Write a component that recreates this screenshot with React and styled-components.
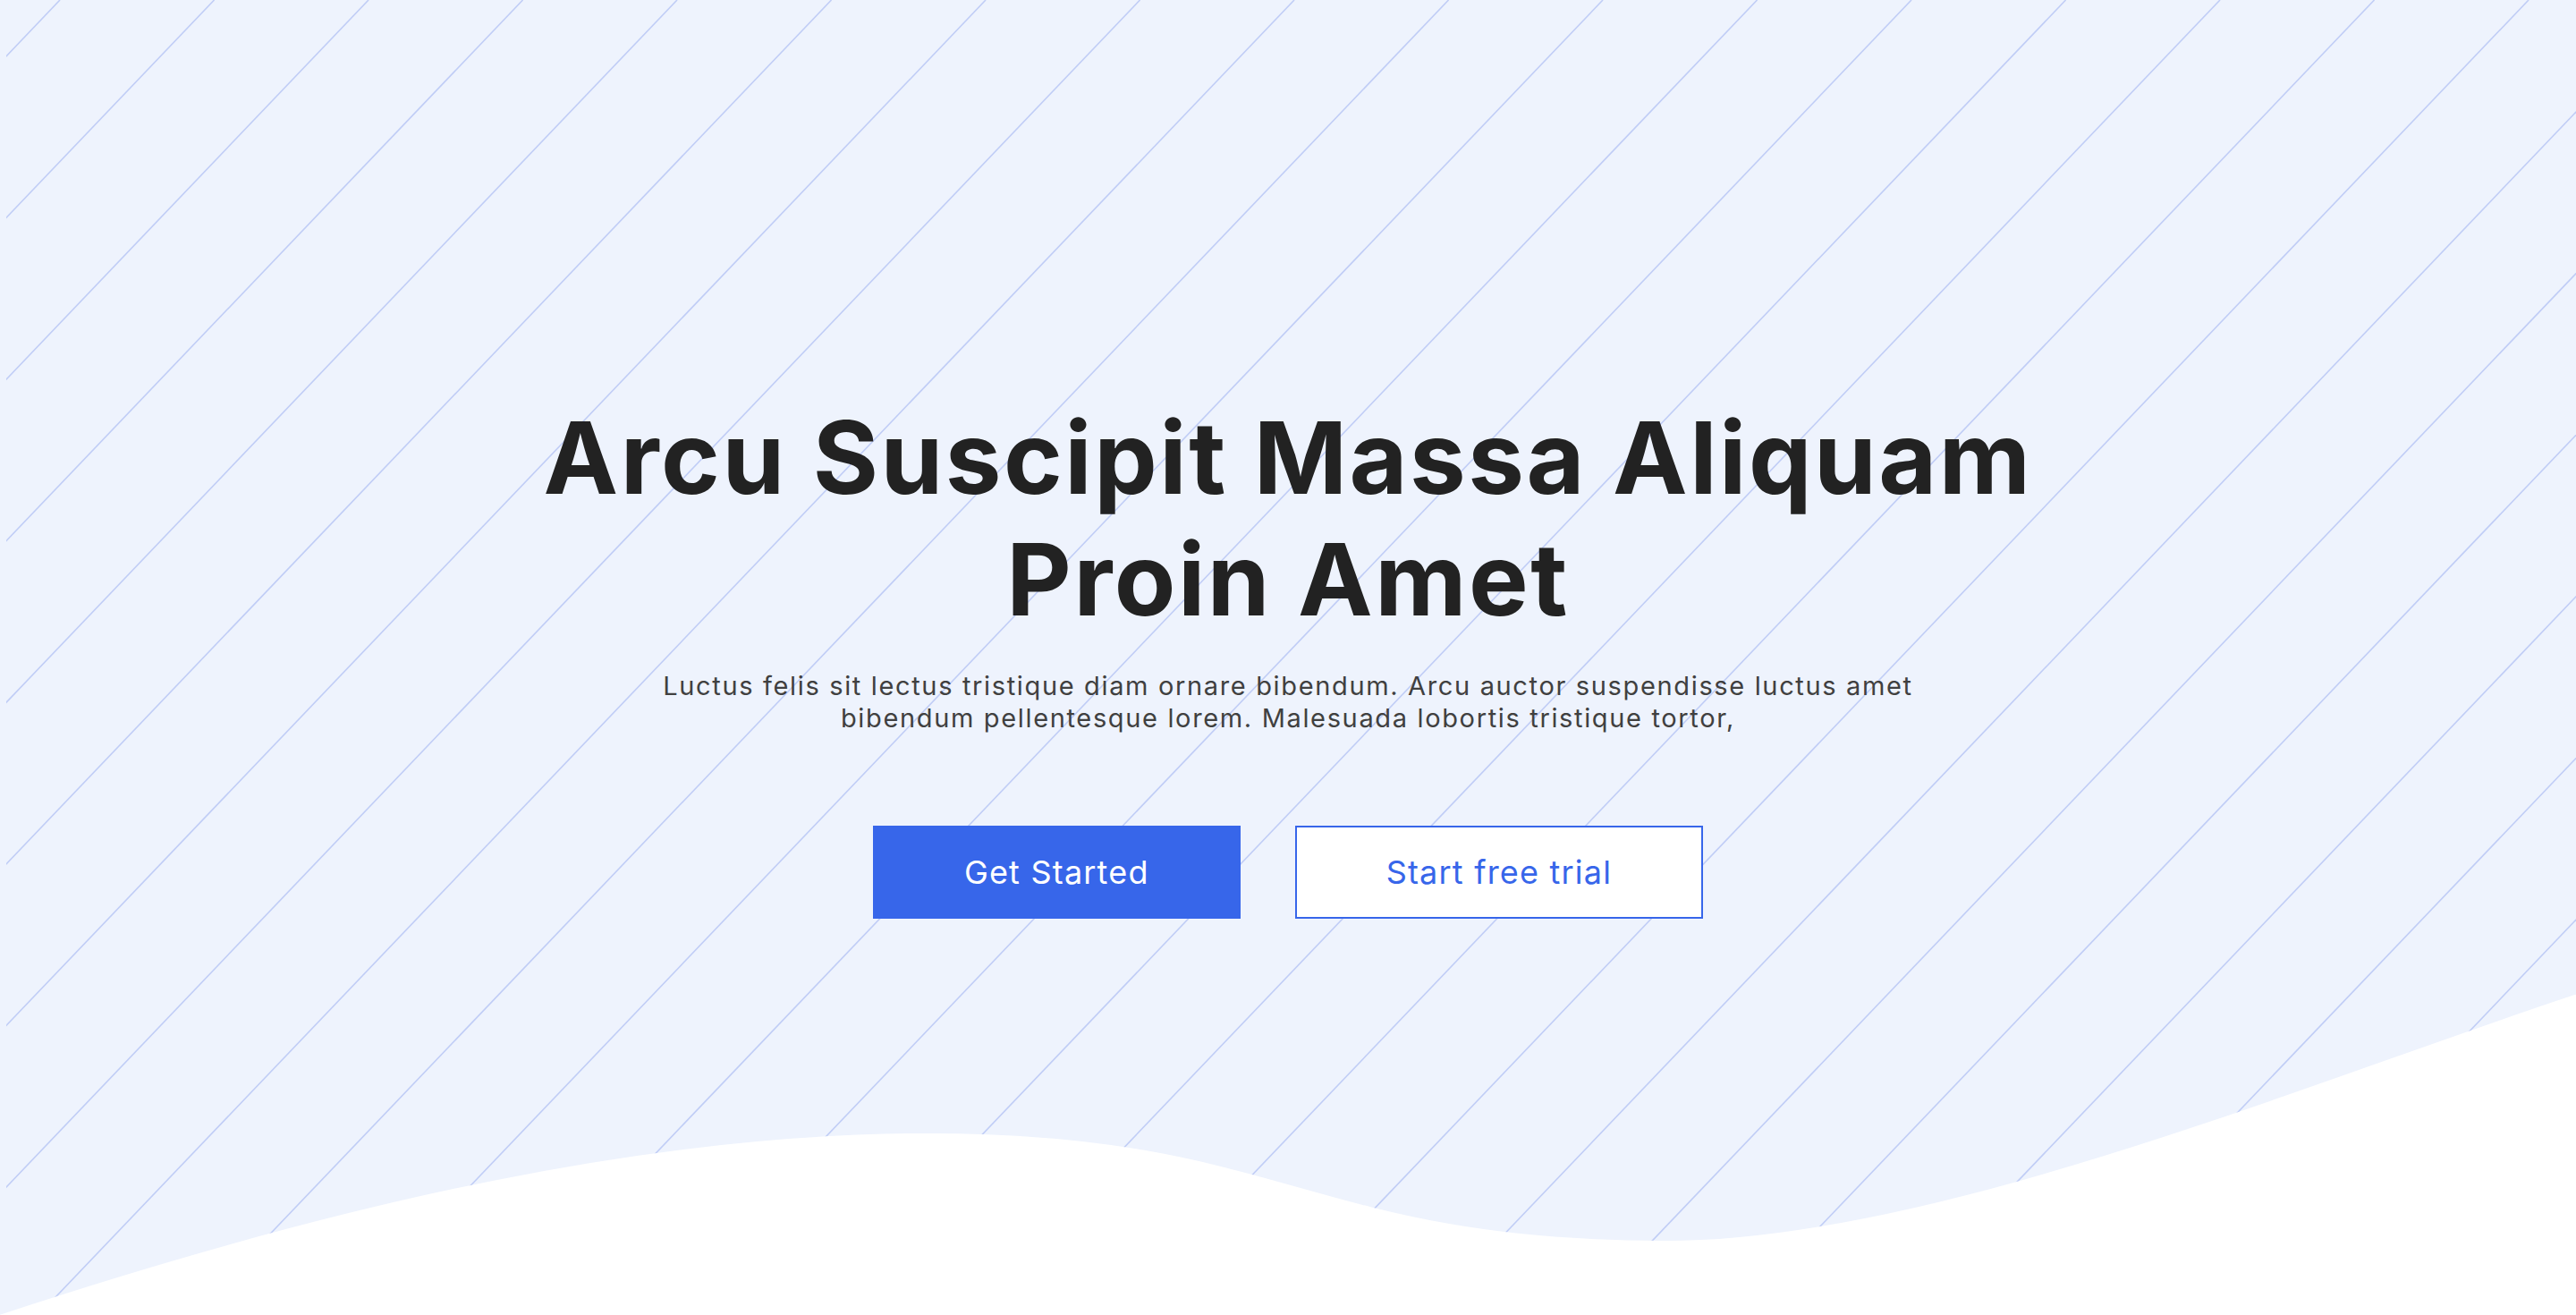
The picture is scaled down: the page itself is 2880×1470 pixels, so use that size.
import React from "react";
import styled, { createGlobalStyle } from "styled-components";

const GlobalStyle = createGlobalStyle`
  html, body {
    margin: 0;
    padding: 0;
    background: #ffffff;
  }
  body {
    font-family: Inter, "Noto Sans", "Liberation Sans", sans-serif;
    -webkit-font-smoothing: antialiased;
  }
`;

const Hero = styled.section`
  position: relative;
  min-height: 1470px;
  background-color: #eef3fd;
  display: flex;
  flex-direction: column;
  align-items: center;
  justify-content: center;
  overflow: hidden;
`;

const Backdrop = styled.svg`
  position: absolute;
  inset: 0;
  width: 100%;
  height: 100%;
  pointer-events: none;
`;

const Content = styled.div`
  position: relative;
  z-index: 1;
  display: flex;
  flex-direction: column;
  align-items: center;
  text-align: center;
`;

const Title = styled.h1`
  margin: 0;
  font-size: 112px;
  line-height: 136px;
  font-weight: 700;
  color: #222222;
  letter-spacing: 2.5px;
`;

const Lead = styled.p`
  margin: 34px 0 0;
  max-width: 1480px;
  font-size: 29px;
  line-height: 36px;
  font-weight: 400;
  letter-spacing: 1.65px;
  color: #404040;
`;

const Actions = styled.div`
  display: flex;
  gap: 61px;
  margin-top: 102px;
`;

const Button = styled.button`
  font-family: inherit;
  font-size: 36px;
  line-height: 44px;
  font-weight: 400;
  letter-spacing: 1.2px;
  padding: 28px 100px;
  cursor: pointer;
  border: 2px solid #3766ea;
  border-radius: 0;
  background: ${(p) => (p.$outline ? "#ffffff" : "#3766ea")};
  color: ${(p) => (p.$outline ? "#3766ea" : "#ffffff")};
`;

const slope = 1.047;
const lines = Array.from({ length: 27 }, (_, k) => {
  const x0 = 67 + 172.5 * k;
  return { x1: x0, y1: 0, x2: x0 - 1470 / slope, y2: 1470 };
});

const wave =
  "M0,1477 C400,1345 737,1274 1037,1274 C1437,1274 1462,1394 1862,1394 C2162,1394 2580,1218 2880,1119 L2880,1490 L0,1490 Z";

const App = () => {
  return (
    <>
      <GlobalStyle />
      <Hero>
        <Backdrop viewBox="0 0 2880 1470" preserveAspectRatio="none">
          <defs>
            <clipPath id="stripes">
              <rect x="7" y="0" width="2873" height="1470" />
            </clipPath>
          </defs>
          <g clipPath="url(#stripes)" stroke="#c0cdf6" strokeWidth="1.6">
            {lines.map((l, i) => (
              <line key={i} {...l} />
            ))}
          </g>
          <path d={wave} fill="#ffffff" stroke="#ffffff" strokeWidth="14" />
        </Backdrop>
        <Content>
          <Title>
            Arcu Suscipit Massa Aliquam
            <br />
            Proin Amet
          </Title>
          <Lead>
            Luctus felis sit lectus tristique diam ornare bibendum. Arcu auctor
            suspendisse luctus amet bibendum pellentesque lorem. Malesuada
            lobortis tristique tortor,
          </Lead>
          <Actions>
            <Button>Get Started</Button>
            <Button $outline>Start free trial</Button>
          </Actions>
        </Content>
      </Hero>
    </>
  );
};

export default App;
